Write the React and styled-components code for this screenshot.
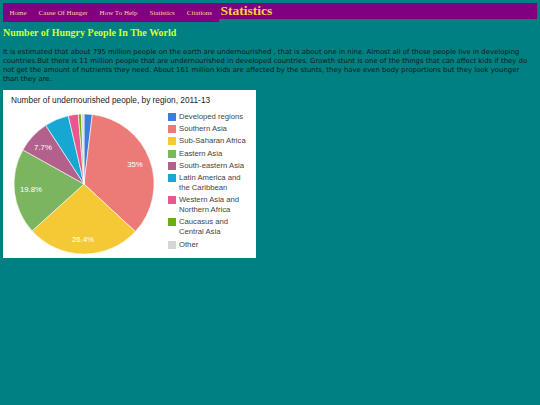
import React from 'react';
import styled, { createGlobalStyle } from 'styled-components';

const GlobalStyle = createGlobalStyle`
    html, body {
        margin: 0;
        padding: 0;
        background: #008080;
    }
    body {
        min-height: 100vh;
    }
`

const Page = styled('div')`
    padding: 3px;
`

const Header = styled('div')`
    display: flex;
    align-items: flex-start;
`

const NavList = styled('ul')`
    display: flex;
    align-items: center;
    list-style: none;
    margin: 0;
    padding: 0 0.5px;
    height: 19px;
    background: #800080;
`

const NavItem = styled('li')`
    padding: 0 6px;
    font-family: "Liberation Serif", serif;
    font-size: 7px;
    color: #ffd2a0;
`

const PageTitle = styled('h1')`
    flex: 1;
    margin: 0;
    height: 16px;
    padding-left: 2px;
    background: #800080;
    font-family: "Liberation Serif", serif;
    font-size: 13.5px;
    font-weight: bold;
    line-height: 16px;
    color: #ffd040;
`

const Heading = styled('h2')`
    margin: 5px 0 0;
    font-family: "Liberation Serif", serif;
    font-size: 10px;
    font-weight: bold;
    line-height: 12px;
    color: #d4ff33;
`

const Intro = styled('p')`
    margin: 8.5px 0 0;
    font-family: "DejaVu Sans", sans-serif;
    font-size: 6.9px;
    line-height: 9px;
    color: #101818;
`

const ChartPanel = styled('div')`
    margin-top: 6.5px;
    width: 253px;
    height: 168px;
    background: #ffffff;
    font-family: "Liberation Sans", Arial, sans-serif;
`

const ChartTitle = styled('div')`
    padding: 5px 0 0 8px;
    height: 14px;
    font-size: 8.3px;
    line-height: 10px;
    color: #222222;
`

const ChartBody = styled('div')`
    display: flex;
    align-items: flex-start;
`

const Legend = styled('ul')`
    list-style: none;
    margin: 0;
    padding: 3px 0 0 7px;
    display: flex;
    flex-direction: column;
    gap: 2.2px;
`

const LegendItem = styled('li')`
    display: flex;
    align-items: flex-start;
    gap: 3px;
    font-size: 7.7px;
    line-height: 10px;
    color: #444444;
`

const Swatch = styled('span')`
    flex: none;
    width: 8px;
    height: 8px;
    margin-top: 1px;
    background: ${props => props.color};
`

const regions = [
    { name: 'Developed regions', value: 1.9, color: '#3b7dd8' },
    { name: 'Southern Asia', value: 35, color: '#ec7b78' },
    { name: 'Sub-Saharan Africa', value: 26.4, color: '#f5c835' },
    { name: 'Eastern Asia', value: 19.8, color: '#7bb55f' },
    { name: 'South-eastern Asia', value: 7.7, color: '#b3608c' },
    { name: ['Latin America and', 'the Caribbean'], value: 5.6, color: '#16a8d3' },
    { name: ['Western Asia and', 'Northern Africa'], value: 2.3, color: '#e8588c' },
    { name: ['Caucasus and', 'Central Asia'], value: 0.7, color: '#6aae14' },
    { name: 'Other', value: 0.6, color: '#d6d6d6' },
]

const labels = [
    { text: '35%', x: 132, y: 56 },
    { text: '26.4%', x: 80, y: 131 },
    { text: '19.8%', x: 28, y: 81 },
    { text: '7.7%', x: 40, y: 39 },
]

const CX = 81
const CY = 75
const R = 70

const point = (pct) => {
    const a = (pct / 100) * Math.PI * 2
    return [CX + R * Math.sin(a), CY - R * Math.cos(a)]
}

const PieChart = () => {
    let start = 0
    return (
        <svg width="158" height="150" viewBox="0 0 158 150">
            {regions.map((r, i) => {
                const [x1, y1] = point(start)
                const [x2, y2] = point(start + r.value)
                const large = r.value > 50 ? 1 : 0
                start += r.value
                return (
                    <path
                        key={i}
                        d={`M${CX} ${CY} L${x1} ${y1} A${R} ${R} 0 ${large} 1 ${x2} ${y2} Z`}
                        fill={r.color}
                        stroke="#ffffff"
                        strokeWidth="0.6"
                    />
                )
            })}
            {labels.map(l => (
                <text
                    key={l.text}
                    x={l.x}
                    y={l.y}
                    fill="#ffffff"
                    fontSize="7.8"
                    fontFamily="Liberation Sans, Arial, sans-serif"
                    textAnchor="middle"
                    dominantBaseline="middle"
                >
                    {l.text}
                </text>
            ))}
        </svg>
    )
}

const navLinks = ['Home', 'Cause Of Hunger', 'How To Help', 'Statistics', 'Citations']

const App = () => (
    <Page>
        <GlobalStyle />
        <Header>
            <NavList>
                {navLinks.map(link => (
                    <NavItem key={link}>{link}</NavItem>
                ))}
            </NavList>
            <PageTitle>Statistics</PageTitle>
        </Header>
        <Heading>Number of Hungry People In The World</Heading>
        <Intro>
            It is estimated that about 795 million people on the earth are undernourished , that is about one in nine. Almost all of those people live in developing countries.But there is 11 million people that are undernourished in developed countries. Growth stunt is one of the things that can affect kids if they do not get the amount of nutrients they need. About 161 million kids are affected by the stunts, they have even body proportions but they look younger than they are.
        </Intro>
        <ChartPanel>
            <ChartTitle>Number of undernourished people, by region, 2011-13</ChartTitle>
            <ChartBody>
                <PieChart />
                <Legend>
                    {regions.map((r, i) => (
                        <LegendItem key={i}>
                            <Swatch color={r.color} />
                            <span>
                                {Array.isArray(r.name)
                                    ? <>{r.name[0]}<br />{r.name[1]}</>
                                    : r.name}
                            </span>
                        </LegendItem>
                    ))}
                </Legend>
            </ChartBody>
        </ChartPanel>
    </Page>
)

export default App;
